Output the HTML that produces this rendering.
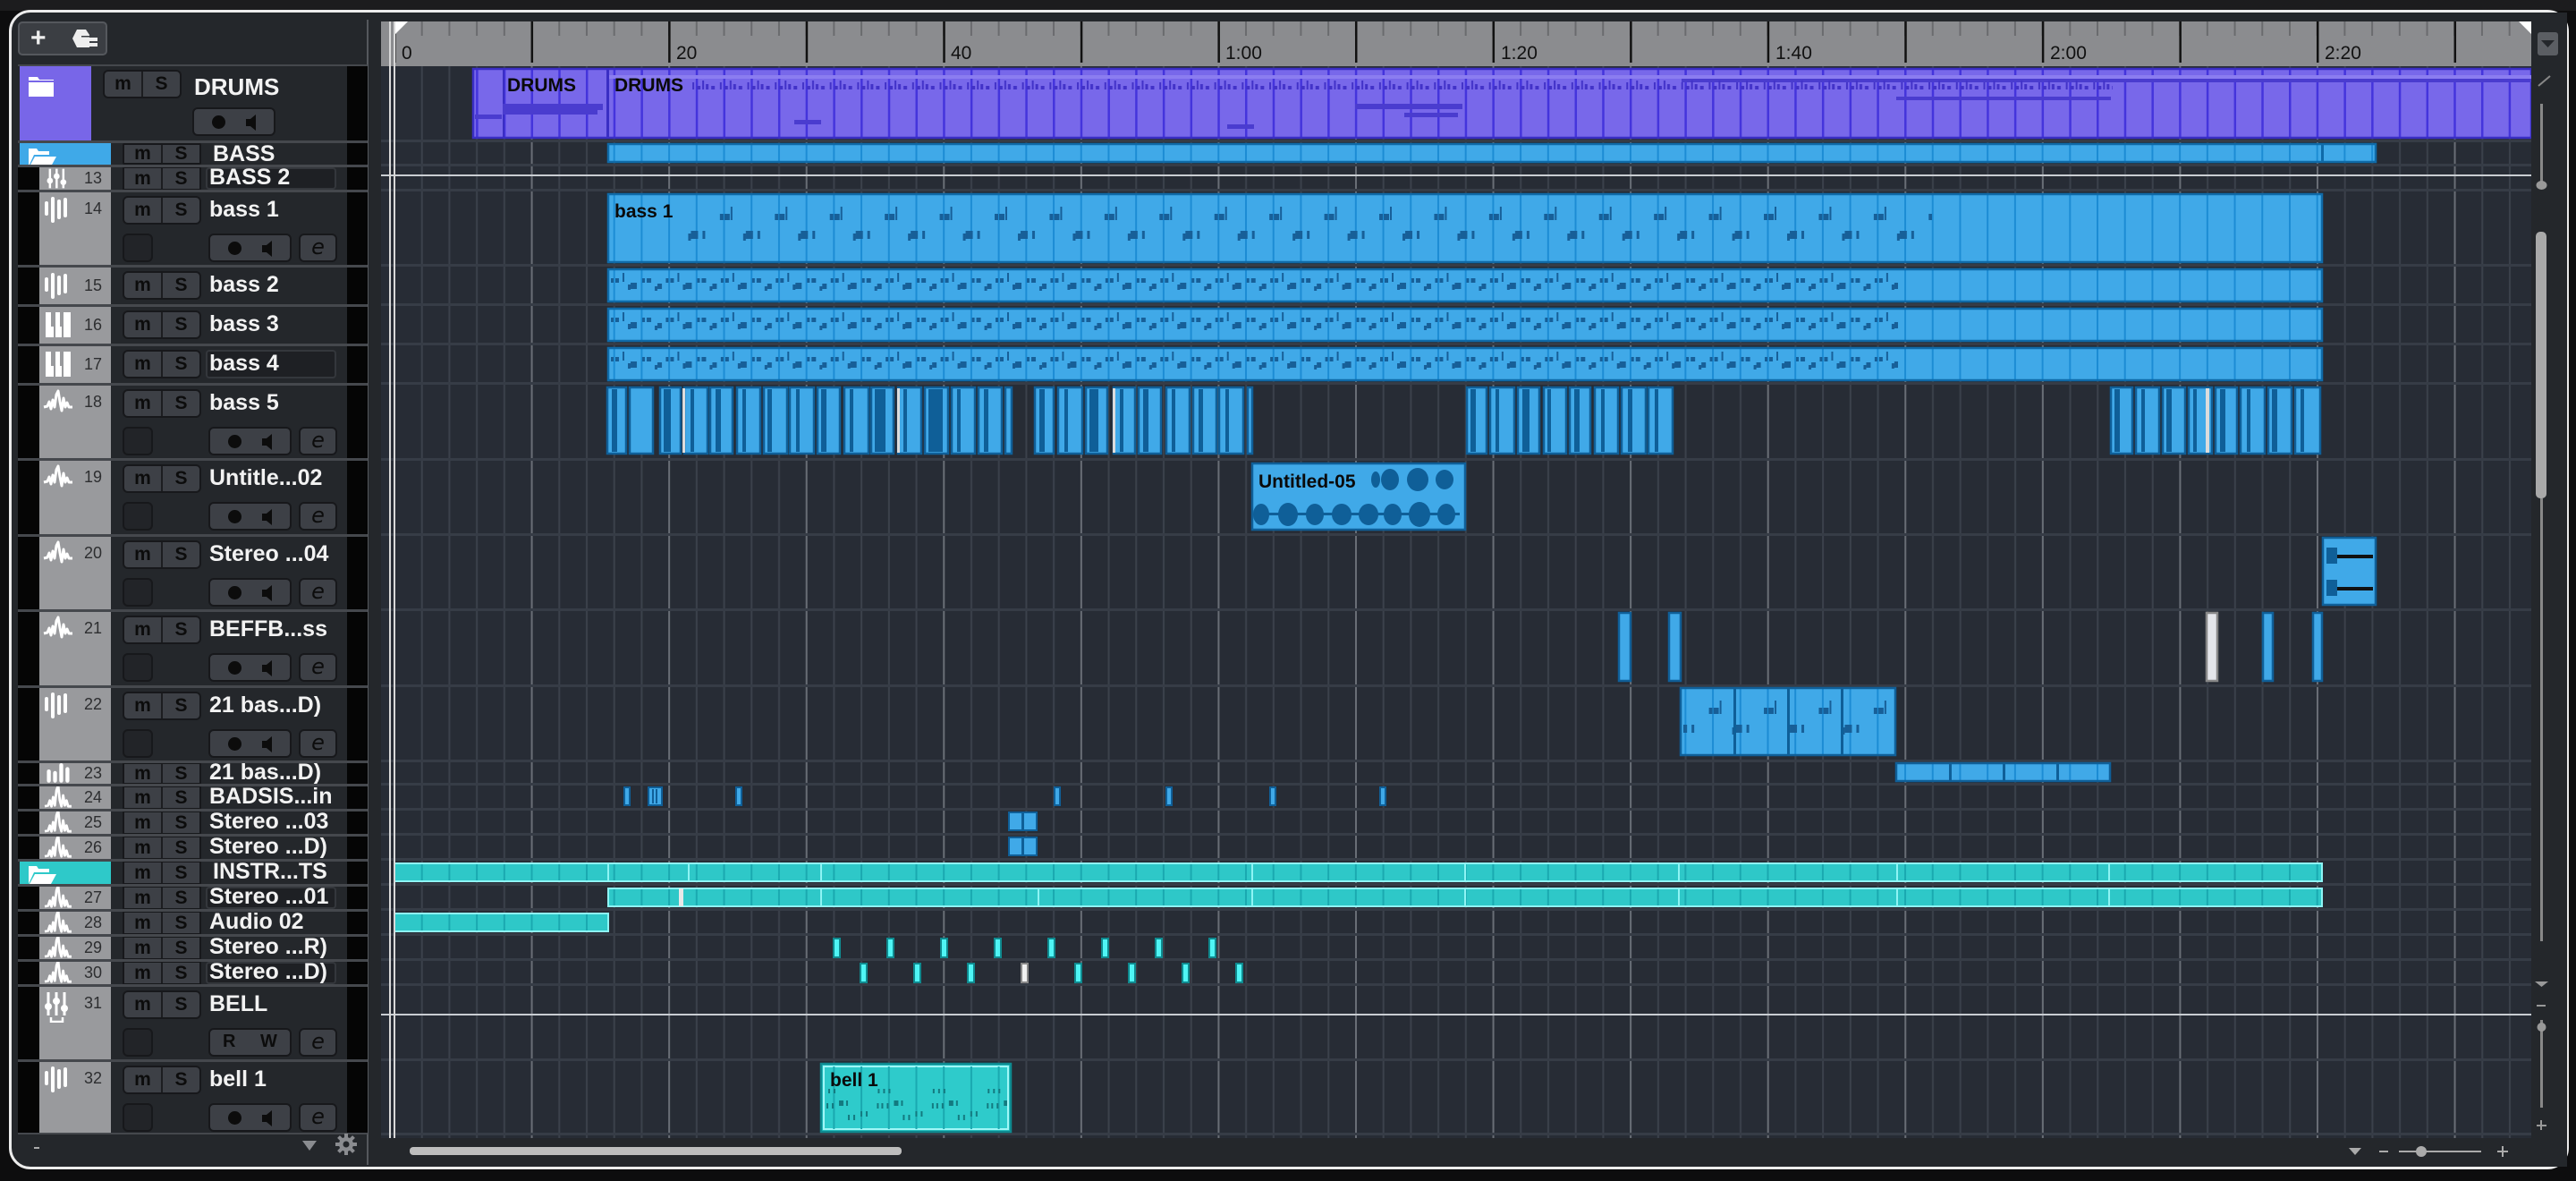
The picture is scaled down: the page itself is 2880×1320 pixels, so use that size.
<!DOCTYPE html>
<html><head><meta charset="utf-8"><style>
*{margin:0;padding:0;box-sizing:border-box}
body{width:2880px;height:1320px;overflow:hidden;background:#0d0d0e;font-family:"Liberation Sans",sans-serif;position:relative}
.top{position:absolute;left:0;top:0;width:2880px;height:12px;background:#1c1c1e}
.win{position:absolute;left:10px;top:11px;width:2862px;height:1296px;border:3px solid #ececec;border-radius:24px;background:#24272b;overflow:hidden}
.a{position:absolute}
.row{position:absolute;left:20px;width:391px;background:#24272b;border-top:3px solid #45484d;overflow:hidden}
.lb{position:absolute;left:0;top:0;width:24px;height:100%;background:#050505}
.gc{position:absolute;left:24px;top:0;width:80px;height:100%;background:#999a9d}
.rb{position:absolute;left:368px;top:0;width:23px;height:100%;background:#050505}
.num{position:absolute;left:50px;font-size:18px;color:#2d2e30;line-height:20px}
.ic{position:absolute;left:4px;width:34px;height:30px}
.ms{position:absolute;left:117px;width:88px;height:32px;border:2px solid #17181b;border-radius:6px;background:#3d4046;display:flex}
.ms span{flex:1;text-align:center;font-weight:bold;font-size:21px;color:#0c0c0c;line-height:27px}
.ms span:first-child{border-right:2px solid #1c1d20}
.nm{position:absolute;left:214px;font-weight:bold;font-size:25px;color:#f2f2f2;white-space:nowrap}
.box{position:absolute;left:210px;width:146px;background:#1e2024;border:2px solid #34373c;border-radius:4px}
.sq{position:absolute;left:117px;width:34px;height:32px;border:2px solid #17181b;border-radius:6px;background:#222428}
.rm{position:absolute;left:213px;width:93px;height:32px;border:2px solid #17181b;border-radius:6px;background:#3d4046}
.rm i{position:absolute;left:20px;top:7px;width:15px;height:15px;border-radius:50%;background:#0c0c0c}
.rm b{position:absolute;left:58px;top:6px;width:0;height:0;border-top:9px solid transparent;border-bottom:9px solid transparent;border-right:11px solid #0c0c0c}
.rm b:after{content:"";position:absolute;left:0;top:-4px;width:5px;height:8px;background:#0c0c0c}
.e{position:absolute;left:314px;width:43px;height:32px;border:2px solid #17181b;border-radius:6px;background:#3d4046;font-family:"DejaVu Sans",sans-serif;font-style:italic;font-size:24px;text-align:center;line-height:26px;color:#0c0c0c}
</style></head><body>
<div class="top"></div>
<div class="win"></div>
<svg width="0" height="0" style="position:absolute">
<defs>
<symbol id="midi" viewBox="0 0 34 30"><g stroke="#fff" stroke-width="4" stroke-linecap="round"><line x1="4" y1="8" x2="4" y2="20"/><line x1="11" y1="3" x2="11" y2="28"/><line x1="18" y1="6" x2="18" y2="24"/><line x1="25" y1="4" x2="25" y2="22"/></g></symbol>
<symbol id="piano" viewBox="0 0 34 30"><rect x="3" y="1" width="28" height="28" fill="#fff"/><rect x="12" y="1" width="2" height="28" fill="#999a9d"/><rect x="21" y="1" width="2" height="28" fill="#999a9d"/><rect x="9" y="1" width="4" height="16" fill="#999a9d"/><rect x="19" y="1" width="4" height="16" fill="#999a9d"/></symbol>
<symbol id="wave" viewBox="0 0 34 30"><polyline points="1,20 5,19 7,14 9,22 11,12 13,20 15,6 17,2 19,14 21,24 23,10 25,20 27,15 29,20 33,20" fill="none" stroke="#fff" stroke-width="3" stroke-linejoin="round"/></symbol>
<symbol id="wave2" viewBox="0 0 34 30"><polyline points="1,27 5,26 7,20 9,27 11,16 13,26 15,8 17,2 19,20 21,27 23,14 25,26 27,20 29,27 33,27" fill="none" stroke="#fff" stroke-width="3" stroke-linejoin="round"/></symbol>
<symbol id="mix" viewBox="0 0 34 30"><g stroke="#fff" stroke-width="3"><line x1="6" y1="2" x2="6" y2="28"/><line x1="15" y1="2" x2="15" y2="28"/><line x1="24" y1="2" x2="24" y2="28"/></g><g fill="#fff"><circle cx="6" cy="18" r="4"/><circle cx="15" cy="12" r="4"/><circle cx="24" cy="20" r="4"/></g></symbol>
<symbol id="bars" viewBox="0 0 34 30"><g stroke="#fff" stroke-width="5" stroke-linecap="round"><line x1="5" y1="14" x2="5" y2="26"/><line x1="13" y1="16" x2="13" y2="26"/><line x1="21" y1="6" x2="21" y2="26"/><line x1="29" y1="11" x2="29" y2="26"/></g></symbol>
<pattern id="grid" x="440" y="0" width="153.57" height="10" patternUnits="userSpaceOnUse"><rect x="0" width="2" height="10" fill="#696e76"/><rect x="30.71" width="2" height="10" fill="#3b414b"/><rect x="61.43" width="2" height="10" fill="#3b414b"/><rect x="92.14" width="2" height="10" fill="#3b414b"/><rect x="122.86" width="2" height="10" fill="#3b414b"/></pattern>
<pattern id="bb" x="440" y="0" width="30.71" height="10" patternUnits="userSpaceOnUse"><rect x="0" width="2" height="10" fill="#1c8cd4"/></pattern>
<pattern id="pb" x="440" y="0" width="30.71" height="10" patternUnits="userSpaceOnUse"><rect x="0" width="2.5" height="10" fill="#4434dc"/></pattern>
<pattern id="cb" x="440" y="0" width="30.71" height="10" patternUnits="userSpaceOnUse"><rect x="0" width="2" height="10" fill="#1aa9b0"/></pattern>
<pattern id="ns" x="680" y="0" width="61.43" height="36" patternUnits="userSpaceOnUse"><g fill="#175f98"><rect x="3" y="10" width="3" height="5"/><rect x="8" y="10" width="4" height="5"/><rect x="16" y="4" width="2" height="10"/><rect x="22" y="17" width="3" height="6"/><rect x="25" y="15" width="7" height="7"/><rect x="38" y="10" width="3" height="5"/><rect x="43" y="10" width="5" height="5"/><rect x="52" y="19" width="3" height="5"/><rect x="55" y="16" width="5" height="6"/></g></pattern>
<pattern id="nl" x="680" y="0" width="61.43" height="76" patternUnits="userSpaceOnUse"><g fill="#175f98"><rect x="2" y="22" width="4" height="7"/><rect x="7" y="22" width="6" height="7"/><rect x="14" y="14" width="2" height="15"/><rect x="28" y="44" width="3" height="8"/><rect x="31" y="41" width="8" height="9"/><rect x="44" y="41" width="3" height="9"/></g></pattern>
<pattern id="nd" x="680" y="0" width="30.71" height="40" patternUnits="userSpaceOnUse"><g fill="#4232c8"><rect x="2" y="14" width="2" height="8"/><rect x="7" y="18" width="4" height="4"/><rect x="13" y="12" width="2" height="10"/><rect x="17" y="16" width="3" height="6"/><rect x="23" y="18" width="4" height="4"/></g></pattern>
<pattern id="nc" x="918" y="0" width="61.43" height="76" patternUnits="userSpaceOnUse"><g fill="#137a80"><rect x="2" y="28" width="2" height="5"/><rect x="8" y="28" width="2" height="5"/><rect x="14" y="28" width="2" height="5"/><rect x="1" y="44" width="2" height="6"/><rect x="6" y="44" width="2" height="6"/><rect x="12" y="44" width="2" height="6"/><rect x="20" y="41" width="5" height="6"/><rect x="28" y="41" width="2" height="6"/><rect x="30" y="57" width="2" height="6"/><rect x="36" y="57" width="2" height="6"/><rect x="44" y="53" width="2" height="6"/><rect x="50" y="53" width="2" height="6"/></g></pattern>
</defs></svg>

<svg class="a" style="left:0;top:0" width="2880" height="1320">
<rect x="413" y="14" width="14" height="1260" fill="#24272b"/>
<rect x="410" y="22" width="2" height="1280" fill="#55585d"/>
<rect x="426" y="24" width="2404" height="1248" fill="#272c35"/>
<rect x="426" y="74" width="2404" height="1198" fill="url(#grid)"/>
<rect x="426" y="24" width="2404" height="50" fill="#8b8c8f"/>
<pattern id="rt" x="440" y="0" width="30.71" height="10" patternUnits="userSpaceOnUse"><rect x="0" width="2" height="10" fill="#6a6b6e"/></pattern>
<rect x="440" y="24" width="2390" height="16" fill="url(#rt)"/>
<pattern id="rT" x="440" y="0" width="153.57" height="10" patternUnits="userSpaceOnUse"><rect x="0" width="2.5" height="10" fill="#111"/></pattern>
<rect x="440" y="24" width="2390" height="46" fill="url(#rT)"/>
<g font-family="Liberation Sans" font-size="21" fill="#111">
<text x="449" y="66">0</text><text x="756" y="66">20</text><text x="1063" y="66">40</text><text x="1370" y="66">1:00</text><text x="1678" y="66">1:20</text><text x="1985" y="66">1:40</text><text x="2292" y="66">2:00</text><text x="2599" y="66">2:20</text>
</g>
<polygon points="441,24 456,24 441,39" fill="#fff"/>
<polygon points="2816,24 2830,24 2830,38" fill="#fff"/>
<g fill="#363c46">
<rect x="426" y="156" width="2404" height="3"/><rect x="426" y="183" width="2404" height="3"/><rect x="426" y="211" width="2404" height="3"/><rect x="426" y="295" width="2404" height="3"/><rect x="426" y="339" width="2404" height="3"/><rect x="426" y="383" width="2404" height="3"/><rect x="426" y="427" width="2404" height="3"/><rect x="426" y="512" width="2404" height="3"/><rect x="426" y="596" width="2404" height="3"/><rect x="426" y="680" width="2404" height="3"/><rect x="426" y="765" width="2404" height="3"/><rect x="426" y="849" width="2404" height="3"/><rect x="426" y="875" width="2404" height="3"/><rect x="426" y="903" width="2404" height="3"/><rect x="426" y="931" width="2404" height="3"/><rect x="426" y="959" width="2404" height="3"/><rect x="426" y="987" width="2404" height="3"/><rect x="426" y="1015" width="2404" height="3"/><rect x="426" y="1043" width="2404" height="3"/><rect x="426" y="1071" width="2404" height="3"/><rect x="426" y="1099" width="2404" height="3"/><rect x="426" y="1183" width="2404" height="3"/><rect x="426" y="1266" width="2404" height="3"/>
</g>
<rect x="426" y="195" width="2404" height="2" fill="#c9cdd2"/>
<rect x="426" y="1133" width="2404" height="2" fill="#c9cdd2"/>

<g>
<rect x="529" y="77" width="2301" height="77" fill="#7868ea"/>
<rect x="529" y="77" width="2301" height="77" fill="url(#pb)"/>
<rect x="529" y="77" width="2301" height="77" fill="none" stroke="#3a2ec4" stroke-width="2.5"/>
<rect x="562" y="77" width="2" height="77" fill="#3a2ec4"/><rect x="678" y="77" width="3" height="77" fill="#3a2ec4"/>
<rect x="1880" y="86" width="950" height="6" fill="#4a3ccf"/>
<rect x="681" y="84" width="2149" height="4" fill="#8b7df0"/>
<g transform="translate(0,78)"><rect x="772" y="0" width="1590" height="40" fill="url(#nd)"/></g>
<rect x="562" y="116" width="112" height="7" fill="#4a3ccf"/><rect x="562" y="123" width="106" height="5" fill="#4a3ccf"/>
<rect x="531" y="128" width="30" height="5" fill="#4a3ccf"/>
<rect x="888" y="134" width="30" height="5" fill="#4a3ccf"/><rect x="1372" y="139" width="30" height="5" fill="#4a3ccf"/>
<rect x="1515" y="116" width="120" height="6" fill="#4a3ccf"/><rect x="1570" y="126" width="60" height="5" fill="#4a3ccf"/>
<rect x="2120" y="108" width="240" height="4" fill="#4a3ccf"/>
<g font-family="Liberation Sans" font-weight="bold" font-size="21" fill="#0a0a0a"><text x="567" y="102">DRUMS</text><text x="687" y="102">DRUMS</text></g>
</g>

<g>
<rect x="680" y="161" width="1976" height="20" fill="#40a9e8"/><rect x="680" y="161" width="1976" height="20" fill="url(#bb)"/>
<rect x="680" y="161" width="1976" height="20" fill="none" stroke="#0f6aa8" stroke-width="2.5"/><rect x="2595" y="161" width="3" height="20" fill="#0f6aa8"/>
</g>
<g>
<rect x="680" y="217" width="1916" height="76" fill="#40a9e8"/><rect x="680" y="217" width="1916" height="76" fill="url(#bb)"/>
<g transform="translate(0,217)"><rect x="760" y="0" width="1400" height="76" fill="url(#nl)"/></g>
<rect x="680" y="217" width="1916" height="76" fill="none" stroke="#0f6aa8" stroke-width="2.5"/>
<text x="687" y="243" font-family="Liberation Sans" font-weight="bold" font-size="21" fill="#0a0a0a">bass 1</text>
</g>
<g transform="translate(0,301)"><rect x="680" y="0" width="1916" height="36" fill="#40a9e8"/><rect x="680" y="0" width="1916" height="36" fill="url(#bb)"/><rect x="682" y="0" width="1440" height="36" fill="url(#ns)"/><rect x="680" y="0" width="1916" height="36" fill="none" stroke="#0f6aa8" stroke-width="2.5"/></g>
<g transform="translate(0,345)"><rect x="680" y="0" width="1916" height="36" fill="#40a9e8"/><rect x="680" y="0" width="1916" height="36" fill="url(#bb)"/><rect x="682" y="0" width="1440" height="36" fill="url(#ns)"/><rect x="680" y="0" width="1916" height="36" fill="none" stroke="#0f6aa8" stroke-width="2.5"/></g>
<g transform="translate(0,389)"><rect x="680" y="0" width="1916" height="36" fill="#40a9e8"/><rect x="680" y="0" width="1916" height="36" fill="url(#bb)"/><rect x="682" y="0" width="1440" height="36" fill="url(#ns)"/><rect x="680" y="0" width="1916" height="36" fill="none" stroke="#0f6aa8" stroke-width="2.5"/></g>

<!-- bass 5 slices -->
<g fill="#40a9e8" stroke="#0f5f98" stroke-width="2.5">
<rect x="679" y="433" width="21" height="74"/><rect x="704" y="433" width="26" height="74"/><rect x="738" y="433" width="23" height="74"/><rect x="765" y="433" width="26" height="74"/><rect x="794" y="433" width="25" height="74"/><rect x="824" y="433" width="26" height="74"/><rect x="854" y="433" width="26" height="74"/><rect x="883" y="433" width="27" height="74"/><rect x="914" y="433" width="25" height="74"/><rect x="944" y="433" width="27" height="74"/><rect x="974" y="433" width="25" height="74"/><rect x="1004" y="433" width="26" height="74"/><rect x="1034" y="433" width="26" height="74"/><rect x="1064" y="433" width="26" height="74"/><rect x="1094" y="433" width="26" height="74"/><rect x="1124" y="433" width="7" height="74"/>
<rect x="1157" y="433" width="21" height="74"/><rect x="1183" y="433" width="27" height="74"/><rect x="1214" y="433" width="24" height="74"/><rect x="1245" y="433" width="24" height="74"/><rect x="1273" y="433" width="25" height="74"/><rect x="1304" y="433" width="26" height="74"/><rect x="1334" y="433" width="26" height="74"/><rect x="1363" y="433" width="27" height="74"/><rect x="1395" y="433" width="5" height="74"/>
<rect x="1640" y="433" width="22" height="74"/><rect x="1666" y="433" width="27" height="74"/><rect x="1697" y="433" width="24" height="74"/><rect x="1726" y="433" width="25" height="74"/><rect x="1755" y="433" width="23" height="74"/><rect x="1783" y="433" width="26" height="74"/><rect x="1813" y="433" width="27" height="74"/><rect x="1843" y="433" width="27" height="74"/>
<rect x="2360" y="433" width="24" height="74"/><rect x="2388" y="433" width="26" height="74"/><rect x="2418" y="433" width="25" height="74"/><rect x="2447" y="433" width="26" height="74"/><rect x="2477" y="433" width="24" height="74"/><rect x="2505" y="433" width="27" height="74"/><rect x="2536" y="433" width="26" height="74"/><rect x="2566" y="433" width="28" height="74"/>
</g>
<g fill="#0f5f98">
<rect x="684" y="435" width="6" height="70"/><rect x="742" y="435" width="8" height="70"/><rect x="772" y="435" width="4" height="70"/><rect x="800" y="435" width="6" height="70"/><rect x="830" y="435" width="4" height="70"/><rect x="858" y="435" width="5" height="70"/><rect x="890" y="435" width="4" height="70"/><rect x="918" y="435" width="6" height="70"/><rect x="950" y="435" width="4" height="70"/><rect x="978" y="435" width="12" height="70"/><rect x="1010" y="435" width="4" height="70"/><rect x="1038" y="435" width="6" height="70"/><rect x="1042" y="435" width="12" height="70"/><rect x="1070" y="435" width="4" height="70"/><rect x="1100" y="435" width="5" height="70"/>
<rect x="1162" y="435" width="6" height="70"/><rect x="1190" y="435" width="4" height="70"/><rect x="1218" y="435" width="10" height="70"/><rect x="1252" y="435" width="4" height="70"/><rect x="1278" y="435" width="6" height="70"/><rect x="1310" y="435" width="4" height="70"/><rect x="1340" y="435" width="5" height="70"/><rect x="1370" y="435" width="4" height="70"/>
<rect x="1644" y="435" width="6" height="70"/><rect x="1672" y="435" width="4" height="70"/><rect x="1702" y="435" width="8" height="70"/><rect x="1730" y="435" width="4" height="70"/><rect x="1760" y="435" width="6" height="70"/><rect x="1790" y="435" width="4" height="70"/><rect x="1820" y="435" width="5" height="70"/><rect x="1850" y="435" width="4" height="70"/>
<rect x="2364" y="435" width="6" height="70"/><rect x="2394" y="435" width="4" height="70"/><rect x="2422" y="435" width="6" height="70"/><rect x="2452" y="435" width="4" height="70"/><rect x="2482" y="435" width="6" height="70"/><rect x="2512" y="435" width="4" height="70"/><rect x="2540" y="435" width="6" height="70"/><rect x="2572" y="435" width="4" height="70"/>
</g>
<g fill="#dcdcdc"><rect x="763" y="434" width="3" height="72"/><rect x="1003" y="434" width="3" height="72"/><rect x="1244" y="434" width="3" height="72"/><rect x="2466" y="434" width="4" height="72"/></g>

<g>
<rect x="1400" y="518" width="238" height="74" fill="#40a9e8" stroke="#0f5f98" stroke-width="2.5"/>
<g fill="#0f5f98"><ellipse cx="1554" cy="536" rx="10" ry="12"/><ellipse cx="1585" cy="536" rx="12" ry="13"/><ellipse cx="1615" cy="536" rx="10" ry="11"/><ellipse cx="1538" cy="536" rx="5" ry="9"/>
<ellipse cx="1410" cy="575" rx="9" ry="12"/><ellipse cx="1440" cy="575" rx="11" ry="13"/><ellipse cx="1470" cy="575" rx="10" ry="12"/><ellipse cx="1500" cy="575" rx="11" ry="12"/><ellipse cx="1530" cy="575" rx="11" ry="12"/><ellipse cx="1557" cy="575" rx="10" ry="12"/><ellipse cx="1587" cy="575" rx="12" ry="14"/><ellipse cx="1617" cy="575" rx="10" ry="12"/>
<rect x="1404" y="573" width="228" height="3"/></g>
<text x="1407" y="545" font-family="Liberation Sans" font-weight="bold" font-size="21" fill="#0a0a0a">Untitled-05</text>
</g>
<rect x="2597" y="601" width="59" height="75" fill="#40a9e8" stroke="#0f5f98" stroke-width="2.5"/>
<g fill="#0f5f98"><rect x="2601" y="612" width="12" height="18"/><rect x="2601" y="648" width="12" height="18"/></g>
<g fill="#111"><rect x="2613" y="620" width="40" height="4"/><rect x="2613" y="656" width="40" height="4"/></g>
<g stroke="#0f5f98" stroke-width="2.5" fill="#40a9e8"><rect x="1810" y="685" width="13" height="76"/><rect x="1866" y="685" width="13" height="76"/><rect x="2530" y="685" width="11" height="76"/><rect x="2586" y="685" width="10" height="76"/></g>
<rect x="2467" y="685" width="12" height="76" fill="#e4e6ea" stroke="#888" stroke-width="2.5"/>
<g><rect x="1879" y="769" width="240" height="75" fill="#40a9e8"/><rect x="1879" y="769" width="240" height="75" fill="url(#bb)"/>
<g transform="translate(0,769)"><rect x="1882" y="0" width="230" height="75" fill="url(#nl)"/></g>
<rect x="1879" y="769" width="240" height="75" fill="none" stroke="#0f5f98" stroke-width="2.5"/>
<g fill="#0f5f98"><rect x="1938" y="769" width="3" height="75"/><rect x="1998" y="769" width="3" height="75"/><rect x="2058" y="769" width="3" height="75"/></g></g>
<g><rect x="2120" y="853" width="239" height="20" fill="#40a9e8"/><rect x="2120" y="853" width="239" height="20" fill="url(#bb)"/><rect x="2120" y="853" width="239" height="20" fill="none" stroke="#0f5f98" stroke-width="2.5"/>
<g fill="#0f5f98"><rect x="2179" y="853" width="3" height="20"/><rect x="2239" y="853" width="3" height="20"/><rect x="2299" y="853" width="3" height="20"/></g></g>
<g fill="#40a9e8" stroke="#0f5f98" stroke-width="2"><rect x="698" y="880" width="6" height="20"/><rect x="725" y="880" width="15" height="20"/><rect x="823" y="880" width="6" height="20"/><rect x="1179" y="880" width="6" height="20"/><rect x="1304" y="880" width="6" height="20"/><rect x="1420" y="880" width="6" height="20"/><rect x="1543" y="880" width="6" height="20"/></g>
<g fill="#0f5f98"><rect x="729" y="882" width="2" height="16"/><rect x="733" y="882" width="2" height="16"/></g>
<g fill="#40a9e8" stroke="#0f5f98" stroke-width="2"><rect x="1128" y="908" width="15" height="20"/><rect x="1144" y="908" width="15" height="20"/><rect x="1128" y="936" width="15" height="20"/><rect x="1144" y="936" width="15" height="20"/></g>
<g><rect x="441" y="965" width="2155" height="20" fill="#2ec8c8"/><rect x="441" y="965" width="2155" height="20" fill="url(#cb)"/><rect x="441" y="965" width="2155" height="20" fill="none" stroke="#8ef4f4" stroke-width="2"/>
<g fill="#8ef4f4"><rect x="679" y="965" width="2" height="20"/><rect x="769" y="965" width="2" height="20"/><rect x="917" y="965" width="2" height="20"/><rect x="1399" y="965" width="2" height="20"/><rect x="1637" y="965" width="2" height="20"/><rect x="1876" y="965" width="2" height="20"/><rect x="2120" y="965" width="2" height="20"/><rect x="2357" y="965" width="2" height="20"/></g></g>
<g><rect x="680" y="993" width="1916" height="20" fill="#2ec8c8"/><rect x="680" y="993" width="1916" height="20" fill="url(#cb)"/><rect x="680" y="993" width="1916" height="20" fill="none" stroke="#8ef4f4" stroke-width="2"/>
<g fill="#8ef4f4"><rect x="917" y="993" width="2" height="20"/><rect x="1160" y="993" width="2" height="20"/><rect x="1399" y="993" width="2" height="20"/><rect x="1637" y="993" width="2" height="20"/><rect x="1876" y="993" width="2" height="20"/><rect x="2120" y="993" width="2" height="20"/><rect x="2357" y="993" width="2" height="20"/></g>
<rect x="759" y="993" width="5" height="20" fill="#e8e8e8"/></g>
<g><rect x="441" y="1021" width="239" height="20" fill="#2ec8c8"/><rect x="441" y="1021" width="239" height="20" fill="url(#cb)"/><rect x="441" y="1021" width="239" height="20" fill="none" stroke="#8ef4f4" stroke-width="2"/></g>
<g fill="#4ff5f5" stroke="#0f8a8f" stroke-width="2"><rect x="932" y="1049" width="7" height="21"/><rect x="992" y="1049" width="7" height="21"/><rect x="1052" y="1049" width="7" height="21"/><rect x="1112" y="1049" width="7" height="21"/><rect x="1172" y="1049" width="7" height="21"/><rect x="1232" y="1049" width="7" height="21"/><rect x="1292" y="1049" width="7" height="21"/><rect x="1352" y="1049" width="7" height="21"/>
<rect x="962" y="1077" width="7" height="21"/><rect x="1022" y="1077" width="7" height="21"/><rect x="1082" y="1077" width="7" height="21"/><rect x="1202" y="1077" width="7" height="21"/><rect x="1262" y="1077" width="7" height="21"/><rect x="1322" y="1077" width="7" height="21"/><rect x="1382" y="1077" width="7" height="21"/></g>
<rect x="1142" y="1077" width="7" height="21" fill="#f0f0f0" stroke="#888" stroke-width="2"/>
<g><rect x="918" y="1189" width="212" height="76" fill="#2ecbcb" stroke="#0e8a90" stroke-width="2.5"/><rect x="921" y="1192" width="206" height="70" fill="none" stroke="#9ff7f7" stroke-width="2"/>
<rect x="921" y="1192" width="206" height="70" fill="url(#cb)"/>
<g transform="translate(0,1189)"><rect x="922" y="0" width="204" height="76" fill="url(#nc)"/></g>
<text x="928" y="1214" font-family="Liberation Sans" font-weight="bold" font-size="21" fill="#0a0a0a">bell 1</text></g>
<rect x="435" y="24" width="2" height="1248" fill="#d8d8d8"/><rect x="440" y="24" width="2" height="1248" fill="#d8d8d8"/>
<rect x="426" y="1272" width="2404" height="32" fill="#24272b"/>
<rect x="458" y="1282" width="550" height="9" rx="4" fill="#bdbdbd"/>
<polygon points="2626,1283 2640,1283 2633,1291" fill="#aaa"/>
<rect x="2660" y="1286" width="10" height="2" fill="#aaa"/>
<rect x="2682" y="1286" width="92" height="2" fill="#aaa"/><circle cx="2707" cy="1287" r="6" fill="#aaa"/>
<rect x="2792" y="1286" width="12" height="2" fill="#aaa"/><rect x="2797" y="1281" width="2" height="12" fill="#aaa"/>
<rect x="2830" y="14" width="40" height="1290" fill="#24272b"/>
<rect x="2837" y="36" width="23" height="26" rx="3" fill="#5b5e63"/><polygon points="2841,45 2856,45 2848.5,53" fill="#24272b"/>
<line x1="2838" y1="96" x2="2851" y2="85" stroke="#888" stroke-width="2"/>
<rect x="2840" y="116" width="3" height="88" fill="#888"/><ellipse cx="2841.5" cy="207" rx="6" ry="5" fill="#999"/>
<rect x="2835" y="259" width="12" height="298" rx="5" fill="#a9a9a9"/>
<rect x="2840" y="557" width="3" height="495" fill="#888"/>
<polygon points="2834,1097 2849,1097 2841.5,1103" fill="#999"/>
<rect x="2836" y="1123" width="10" height="2" fill="#999"/>
<rect x="2840" y="1140" width="3" height="98" fill="#888"/><circle cx="2841.5" cy="1148" r="5" fill="#999"/>
<rect x="2836" y="1257" width="11" height="2" fill="#999"/><rect x="2840" y="1252" width="2" height="11" fill="#999"/>
</svg>

<div class="a" style="left:20px;top:24px;width:100px;height:38px;border:2px solid #55585d;border-radius:5px;background:#3b3e43"></div>
<div class="a" style="left:34px;top:32px;font-size:30px;font-weight:bold;color:#eee;line-height:22px">+</div>
<svg class="a" style="left:78px;top:31px" width="34" height="24"><polygon points="8,2 18,2 22,8 22,22 8,22 3,12" fill="#eee"/><rect x="15" y="11" width="16" height="4" fill="#eee"/><rect x="15" y="17" width="16" height="4" fill="#eee"/><rect x="13" y="9" width="20" height="1.5" fill="#3b3e43"/></svg>
<div class="a" style="left:20px;top:72px;width:391px;height:3px;background:#45484d"></div>

<div class="row" style="top:74px;height:83px;border-top:0">
 <div class="a" style="left:2px;top:0;width:80px;height:83px;background:#7866e8"></div>
 <svg class="a" style="left:10px;top:8px" width="32" height="28"><path d="M2 4h10l2 3h16v19H2z" fill="#fff"/><rect x="2" y="8" width="28" height="2" fill="#7866e8"/></svg>
 <div class="ms" style="left:95px;top:4px"><span>m</span><span>S</span></div>
 <div class="nm" style="left:197px;top:8px;font-size:26px">DRUMS</div>
 <div class="rm" style="left:195px;top:46px"><i></i><b></b></div>
 <div class="rb"></div>
</div>
<div class="row" style="top:157px;height:27px">
 <div class="a" style="left:2px;top:0;width:102px;height:27px;background:#3fa9e8"></div>
 <svg class="a" style="left:10px;top:2px" width="34" height="24"><path d="M2 4h9l2 3h12v4H8L2 24z" fill="#fff"/><path d="M9 13h24l-6 11H3z" fill="#fff"/></svg>
 <div class="ms" style="top:0;height:24px;border-radius:2px"><span style="line-height:20px">m</span><span style="line-height:20px">S</span></div>
 <div class="nm" style="left:218px;top:-2px">BASS</div>
 <div class="rb"></div>
</div>

<div class="row" style="top:184px;height:28px"><div class="lb"></div><div class="gc"><svg class="ic" style="top:0;height:25px"><use href="#mix"/></svg><span class="num" style="top:2px">13</span></div>
 <div class="box" style="top:0;height:25px"></div><div class="ms" style="top:-1px;height:27px;border-radius:2px"><span style="line-height:23px">m</span><span style="line-height:23px">S</span></div><div class="nm" style="top:-3px">BASS 2</div><div class="rb"></div></div>
<div class="row" style="top:212px;height:84px"><div class="lb"></div><div class="gc"><svg class="ic" style="top:4px"><use href="#midi"/></svg><span class="num" style="top:8px">14</span></div>
 <div class="ms" style="top:4px"><span>m</span><span>S</span></div><div class="nm" style="top:5px">bass 1</div>
 <div class="sq" style="top:46px"></div><div class="rm" style="top:46px"><i></i><b></b></div><div class="e" style="top:46px">e</div><div class="rb"></div></div>
<div class="row" style="top:296px;height:44px"><div class="lb"></div><div class="gc"><svg class="ic" style="top:5px"><use href="#midi"/></svg><span class="num" style="top:10px">15</span></div>
 <div class="ms" style="top:4px"><span>m</span><span>S</span></div><div class="nm" style="top:5px">bass 2</div><div class="rb"></div></div>
<div class="row" style="top:340px;height:44px"><div class="lb"></div><div class="gc"><svg class="ic" style="top:5px"><use href="#piano"/></svg><span class="num" style="top:10px">16</span></div>
 <div class="ms" style="top:4px"><span>m</span><span>S</span></div><div class="nm" style="top:5px">bass 3</div><div class="rb"></div></div>
<div class="row" style="top:384px;height:44px"><div class="lb"></div><div class="gc"><svg class="ic" style="top:5px"><use href="#piano"/></svg><span class="num" style="top:10px">17</span></div>
 <div class="box" style="top:4px;height:32px"></div><div class="ms" style="top:4px"><span>m</span><span>S</span></div><div class="nm" style="top:5px">bass 4</div><div class="rb"></div></div>
<div class="row" style="top:428px;height:84px"><div class="lb"></div><div class="gc"><svg class="ic" style="top:4px"><use href="#wave"/></svg><span class="num" style="top:8px">18</span></div>
 <div class="ms" style="top:4px"><span>m</span><span>S</span></div><div class="nm" style="top:5px">bass 5</div>
 <div class="sq" style="top:46px"></div><div class="rm" style="top:46px"><i></i><b></b></div><div class="e" style="top:46px">e</div><div class="rb"></div></div>
<div class="row" style="top:512px;height:85px"><div class="lb"></div><div class="gc"><svg class="ic" style="top:4px"><use href="#wave"/></svg><span class="num" style="top:8px">19</span></div>
 <div class="ms" style="top:4px"><span>m</span><span>S</span></div><div class="nm" style="top:5px">Untitle...02</div>
 <div class="sq" style="top:46px"></div><div class="rm" style="top:46px"><i></i><b></b></div><div class="e" style="top:46px">e</div><div class="rb"></div></div>
<div class="row" style="top:597px;height:84px"><div class="lb"></div><div class="gc"><svg class="ic" style="top:4px"><use href="#wave"/></svg><span class="num" style="top:8px">20</span></div>
 <div class="ms" style="top:4px"><span>m</span><span>S</span></div><div class="nm" style="top:5px">Stereo ...04</div>
 <div class="sq" style="top:46px"></div><div class="rm" style="top:46px"><i></i><b></b></div><div class="e" style="top:46px">e</div><div class="rb"></div></div>
<div class="row" style="top:681px;height:85px"><div class="lb"></div><div class="gc"><svg class="ic" style="top:4px"><use href="#wave"/></svg><span class="num" style="top:8px">21</span></div>
 <div class="ms" style="top:4px"><span>m</span><span>S</span></div><div class="nm" style="top:5px">BEFFB...ss</div>
 <div class="sq" style="top:46px"></div><div class="rm" style="top:46px"><i></i><b></b></div><div class="e" style="top:46px">e</div><div class="rb"></div></div>
<div class="row" style="top:766px;height:84px"><div class="lb"></div><div class="gc"><svg class="ic" style="top:4px"><use href="#midi"/></svg><span class="num" style="top:8px">22</span></div>
 <div class="ms" style="top:4px"><span>m</span><span>S</span></div><div class="nm" style="top:5px">21 bas...D)</div>
 <div class="sq" style="top:46px"></div><div class="rm" style="top:46px"><i></i><b></b></div><div class="e" style="top:46px">e</div><div class="rb"></div></div>
<div class="row" style="top:850px;height:26px"><div class="lb"></div><div class="gc"><svg class="ic" style="top:-3px;height:26px"><use href="#bars"/></svg><span class="num" style="top:1px">23</span></div>
 <div class="ms" style="top:-1px;height:25px;border-radius:2px"><span style="line-height:21px">m</span><span style="line-height:21px">S</span></div><div class="nm" style="top:-4px">21 bas...D)</div><div class="rb"></div></div>
<div class="row" style="top:876px;height:28px"><div class="lb"></div><div class="gc"><svg class="ic" style="top:-3px;height:28px"><use href="#wave2"/></svg><span class="num" style="top:2px">24</span></div>
 <div class="ms" style="top:-1px;height:27px;border-radius:2px"><span style="line-height:23px">m</span><span style="line-height:23px">S</span></div><div class="nm" style="top:-3px">BADSIS...in</div><div class="rb"></div></div>
<div class="row" style="top:904px;height:28px"><div class="lb"></div><div class="gc"><svg class="ic" style="top:-3px;height:28px"><use href="#wave2"/></svg><span class="num" style="top:2px">25</span></div>
 <div class="ms" style="top:-1px;height:27px;border-radius:2px"><span style="line-height:23px">m</span><span style="line-height:23px">S</span></div><div class="nm" style="top:-3px">Stereo ...03</div><div class="rb"></div></div>
<div class="row" style="top:932px;height:28px"><div class="lb"></div><div class="gc"><svg class="ic" style="top:-3px;height:28px"><use href="#wave2"/></svg><span class="num" style="top:2px">26</span></div>
 <div class="ms" style="top:-1px;height:27px;border-radius:2px"><span style="line-height:23px">m</span><span style="line-height:23px">S</span></div><div class="nm" style="top:-3px">Stereo ...D)</div><div class="rb"></div></div>
<div class="row" style="top:960px;height:28px">
 <div class="a" style="left:2px;top:0;width:102px;height:25px;background:#2ec9c9"></div>
 <svg class="a" style="left:10px;top:1px" width="34" height="24"><path d="M2 4h9l2 3h12v4H8L2 24z" fill="#fff"/><path d="M9 13h24l-6 11H3z" fill="#fff"/></svg>
 <div class="ms" style="top:-1px;height:27px;border-radius:2px"><span style="line-height:23px">m</span><span style="line-height:23px">S</span></div><div class="nm" style="left:218px;top:-3px">INSTR...TS</div><div class="rb"></div></div>
<div class="row" style="top:988px;height:28px"><div class="lb"></div><div class="gc"><svg class="ic" style="top:-3px;height:28px"><use href="#wave2"/></svg><span class="num" style="top:2px">27</span></div>
 <div class="box" style="top:0;height:25px"></div><div class="ms" style="top:-1px;height:27px;border-radius:2px"><span style="line-height:23px">m</span><span style="line-height:23px">S</span></div><div class="nm" style="top:-3px">Stereo ...01</div><div class="rb"></div></div>
<div class="row" style="top:1016px;height:28px"><div class="lb"></div><div class="gc"><svg class="ic" style="top:-3px;height:28px"><use href="#wave2"/></svg><span class="num" style="top:2px">28</span></div>
 <div class="ms" style="top:-1px;height:27px;border-radius:2px"><span style="line-height:23px">m</span><span style="line-height:23px">S</span></div><div class="nm" style="top:-3px">Audio 02</div><div class="rb"></div></div>
<div class="row" style="top:1044px;height:28px"><div class="lb"></div><div class="gc"><svg class="ic" style="top:-3px;height:28px"><use href="#wave2"/></svg><span class="num" style="top:2px">29</span></div>
 <div class="ms" style="top:-1px;height:27px;border-radius:2px"><span style="line-height:23px">m</span><span style="line-height:23px">S</span></div><div class="nm" style="top:-3px">Stereo ...R)</div><div class="rb"></div></div>
<div class="row" style="top:1072px;height:28px"><div class="lb"></div><div class="gc"><svg class="ic" style="top:-3px;height:28px"><use href="#wave2"/></svg><span class="num" style="top:2px">30</span></div>
 <div class="box" style="top:0;height:25px"></div><div class="ms" style="top:-1px;height:27px;border-radius:2px"><span style="line-height:23px">m</span><span style="line-height:23px">S</span></div><div class="nm" style="top:-3px">Stereo ...D)</div><div class="rb"></div></div>
<div class="row" style="top:1100px;height:84px"><div class="lb"></div><div class="gc"><svg class="ic" style="top:4px;height:36px" viewBox="0 0 34 36"><use href="#mix" width="34" height="30"/><path d="M9 30v5h13v-5" fill="none" stroke="#fff" stroke-width="2.5"/></svg><span class="num" style="top:8px">31</span></div>
 <div class="ms" style="top:4px"><span>m</span><span>S</span></div><div class="nm" style="top:5px">BELL</div>
 <div class="sq" style="top:46px"></div><div class="rm" style="top:46px"><span class="a" style="left:14px;top:2px;font-weight:bold;font-size:20px;color:#0c0c0c">R</span><span class="a" style="left:56px;top:2px;font-weight:bold;font-size:20px;color:#0c0c0c">W</span></div><div class="e" style="top:46px">e</div><div class="rb"></div></div>
<div class="row" style="top:1184px;height:82px"><div class="lb"></div><div class="gc"><svg class="ic" style="top:4px"><use href="#midi"/></svg><span class="num" style="top:8px">32</span></div>
 <div class="ms" style="top:4px"><span>m</span><span>S</span></div><div class="nm" style="top:5px">bell 1</div>
 <div class="sq" style="top:46px"></div><div class="rm" style="top:46px"><i></i><b></b></div><div class="e" style="top:46px">e</div><div class="rb"></div></div>
<div class="a" style="left:20px;top:1266px;width:391px;height:2px;background:#45484d"></div>
<div class="a" style="left:38px;top:1282px;width:6px;height:2px;background:#aaa"></div>
<div class="a" style="left:338px;top:1275px;width:0;height:0;border-left:8px solid transparent;border-right:8px solid transparent;border-top:11px solid #8a8c90"></div>
<svg class="a" style="left:374px;top:1266px" width="26" height="26"><g fill="#8a8c90"><circle cx="13" cy="13" r="8"/><rect x="11" y="1" width="4" height="24"/><rect x="1" y="11" width="24" height="4"/><rect x="11" y="1" width="4" height="24" transform="rotate(45 13 13)"/><rect x="11" y="1" width="4" height="24" transform="rotate(-45 13 13)"/></g><circle cx="13" cy="13" r="3.5" fill="#24272b"/></svg>
</body></html>
